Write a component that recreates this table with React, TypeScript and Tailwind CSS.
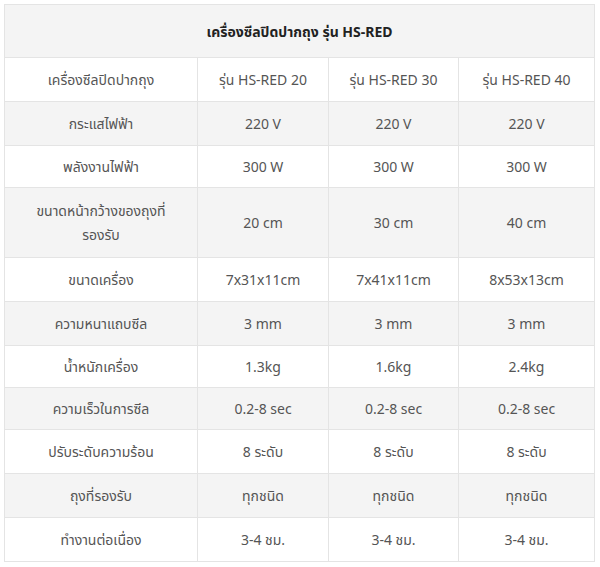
import React from "react";

const rows: { label: string; v: string[]; h: string; gray: boolean }[] = [
  { label: "เครื่องซีลปิดปากถุง", v: ["รุ่น HS-RED 20", "รุ่น HS-RED 30", "รุ่น HS-RED 40"], h: "h-[44px]", gray: false },
  { label: "กระแสไฟฟ้า", v: ["220 V", "220 V", "220 V"], h: "h-[44px]", gray: true },
  { label: "พลังงานไฟฟ้า", v: ["300 W", "300 W", "300 W"], h: "h-[42px]", gray: false },
  { label: "ขนาดหน้ากว้างของถุงที่รองรับ", v: ["20 cm", "30 cm", "40 cm"], h: "h-[70px]", gray: true },
  { label: "ขนาดเครื่อง", v: ["7x31x11cm", "7x41x11cm", "8x53x13cm"], h: "h-[44px]", gray: false },
  { label: "ความหนาแถบซีล", v: ["3 mm", "3 mm", "3 mm"], h: "h-[44px]", gray: true },
  { label: "น้ำหนักเครื่อง", v: ["1.3kg", "1.6kg", "2.4kg"], h: "h-[42px]", gray: false },
  { label: "ความเร็วในการซีล", v: ["0.2-8 sec", "0.2-8 sec", "0.2-8 sec"], h: "h-[42px]", gray: true },
  { label: "ปรับระดับความร้อน", v: ["8 ระดับ", "8 ระดับ", "8 ระดับ"], h: "h-[44px]", gray: false },
  { label: "ถุงที่รองรับ", v: ["ทุกชนิด", "ทุกชนิด", "ทุกชนิด"], h: "h-[44px]", gray: true },
  { label: "ทำงานต่อเนื่อง", v: ["3-4 ชม.", "3-4 ชม.", "3-4 ชม."], h: "h-[44px]", gray: false },
];

export default function App() {
  return (
    <div className="w-[600px] h-[567px] bg-white pt-[4px] pl-[4px]" style={{ fontFamily: '"Noto Sans", "Noto Sans Thai", sans-serif' }}>
      <table className="border-collapse border border-[#e4e4e4] table-fixed w-[590px] text-[14px] text-[#555555]">
        <colgroup>
          <col className="w-[193px]" />
          <col className="w-[131px]" />
          <col className="w-[130px]" />
          <col className="w-[136px]" />
        </colgroup>
        <tbody>
          <tr className="h-[53px] bg-[#f4f4f4]">
            <td colSpan={4} className="border border-[#e4e4e4] text-center font-bold text-[#222222]">
              เครื่องซีลปิดปากถุง รุ่น HS-RED
            </td>
          </tr>
          {rows.map((r, i) => (
            <tr key={i} className={`${r.h} ${r.gray ? "bg-[#f4f4f4]" : "bg-white"}`}>
              <td className="border border-[#e4e4e4] text-center px-[10px] leading-[24px]">
                {r.label === "ขนาดหน้ากว้างของถุงที่รองรับ" ? (
                  <>ขนาดหน้ากว้างของถุงที่<br />รองรับ</>
                ) : (
                  r.label
                )}
              </td>
              {r.v.map((x, j) => (
                <td key={j} className="border border-[#e4e4e4] text-center">
                  {x}
                </td>
              ))}
            </tr>
          ))}
        </tbody>
      </table>
    </div>
  );
}
